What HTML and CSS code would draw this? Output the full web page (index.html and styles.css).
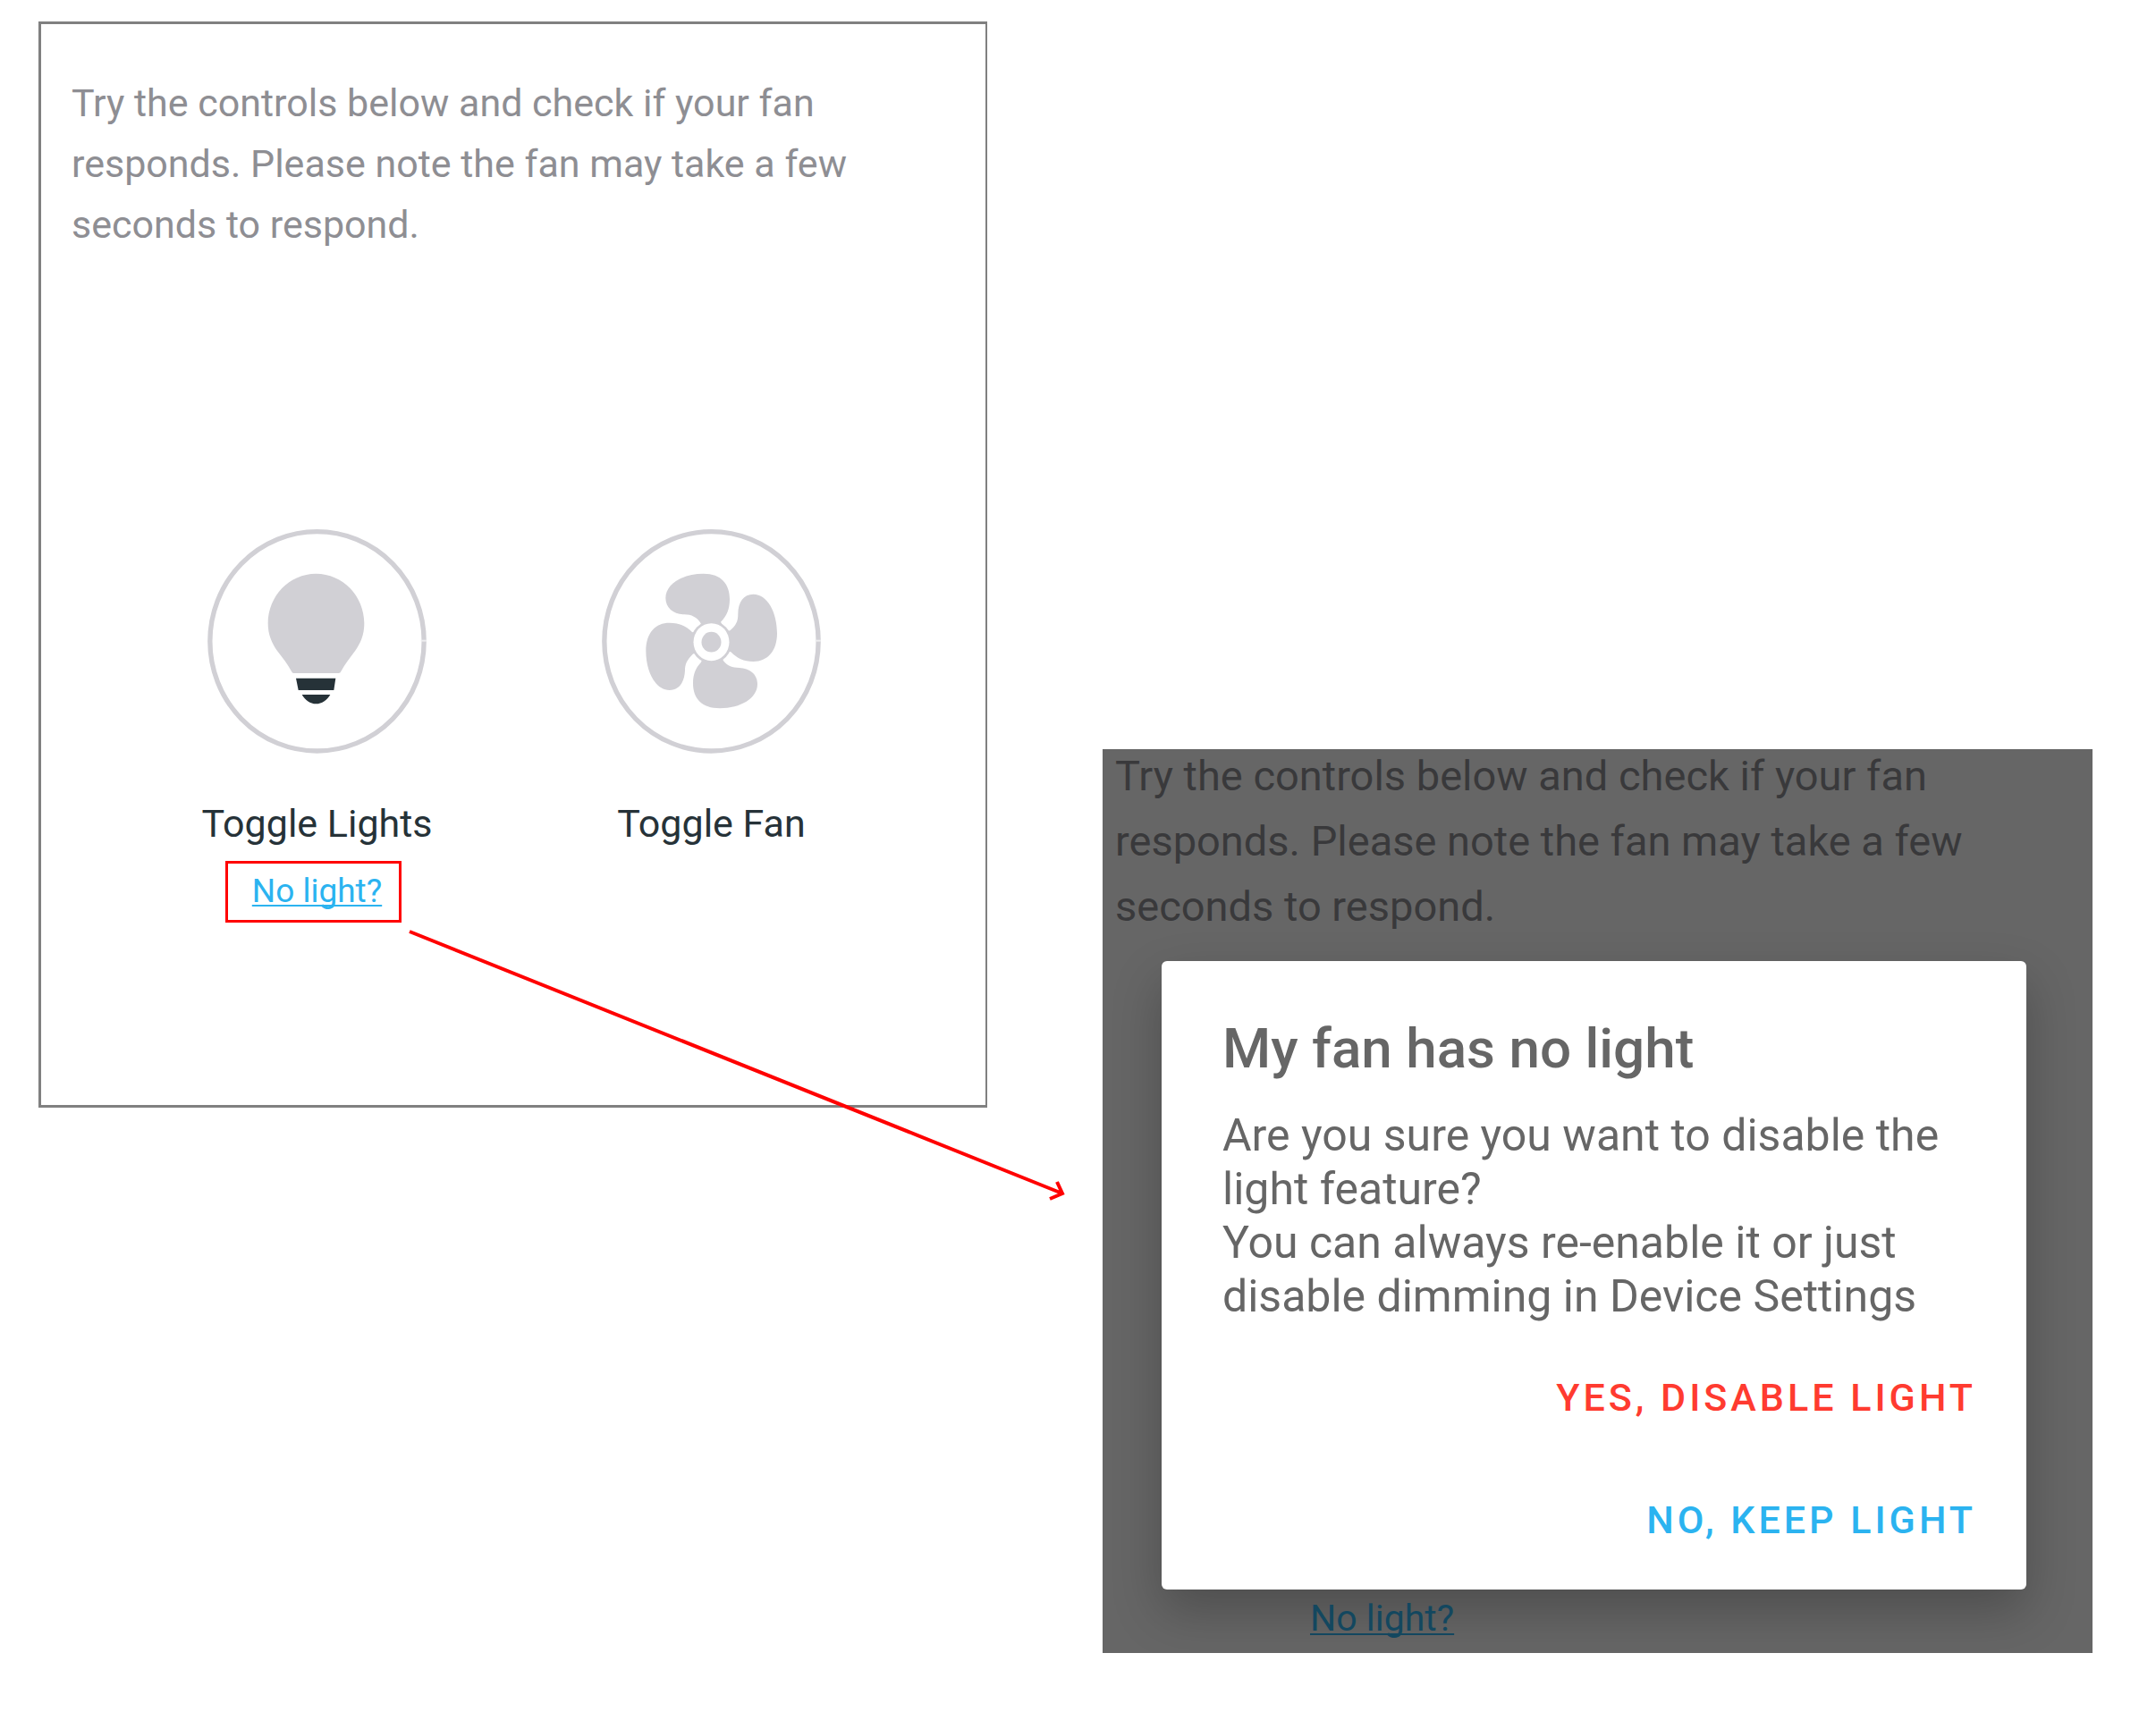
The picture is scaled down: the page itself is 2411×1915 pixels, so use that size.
FILE: index.html
```html
<!DOCTYPE html>
<html lang="en">
<head>
    <meta charset="utf-8">
    <title>Fan Setup</title>
    <meta name="viewport" content="width=device-width, initial-scale=1.0">
    <link rel="stylesheet" href="styles.css">
</head>
<body>
    <main class="page">
        <section class="screen">
            <p class="intro">Try the controls below and check if your fan responds. Please note the fan may take a few seconds to respond.</p>

            <div class="controls">
                <div class="control">
                    <button type="button" class="toggle">
                        <svg class="toggle-icon" viewBox="66 66 735 753" aria-hidden="true">
                            <ellipse cx="433.5" cy="442" rx="359" ry="368" fill="none" stroke="#d1d0d5" stroke-width="16"/>
                            <path d="M782 440h20" stroke="#ececee" stroke-width="6"/>
                            <path fill="#d1d0d5" d="M430 215C520 215 592 290 592 382C592 420 580 448 562 473C545 497 527 518 514 543Q512 549 506 549H355Q350 549 348 543C335 518 318 498 300 474C282 448 269 420 269 382C269 290 341 215 430 215Z"/>
                            <path fill="#263238" d="M363 566H496L490 606H371ZM383 621H478C467 640 450 652 430 652C411 652 394 640 383 621Z"/>
                        </svg>
                        <span>Toggle Lights</span>
                    </button>
                    <div class="callout">
                        <a href="#no-light">No light?</a>
                        <svg class="arrow" viewBox="0 0 750 320" aria-hidden="true">
                            <path d="M12 13L742 306M736 293L742 306L728 312"/>
                        </svg>
                    </div>
                </div>

                <div class="control">
                    <button type="button" class="toggle">
                        <svg class="toggle-icon" viewBox="69 66 735 753" aria-hidden="true">
                            <ellipse cx="436.5" cy="442" rx="359" ry="368" fill="none" stroke="#d1d0d5" stroke-width="16"/>
                            <path d="M785 440h20" stroke="#ececee" stroke-width="6"/>
                            <g fill="#d1d0d5">
                                <path d="M400 380C388 362 370 352 346 352C310 352 283 330 283 297C283 250 340 215 410 215C470 215 498 250 498 300C498 335 488 358 468 377L480 400H410Z"/>
                                <path d="M499 406C519 388 526 376 526 350C526 310 545 284 577 284C625 284 657 345 657 415C657 475 625 510 577 510C545 510 522 499 502 478L480 470V410Z"/>
                                <path d="M477 508C492 526 506 531 530 531C567 533 591 553 591 586C591 633 535 667 465 667C405 667 375 635 375 583C375 552 384 531 402 512L410 490H470Z"/>
                                <path d="M374 485C354 505 348 519 348 540C346 580 328 606 296 606C250 606 217 545 217 475C217 412 250 380 296 380C328 380 352 390 372 411L400 420V470Z"/>
                                <ellipse cx="436.5" cy="444.5" rx="69" ry="71"/>
                            </g>
                            <ellipse cx="436.5" cy="444.5" rx="60" ry="63" fill="#fff"/>
                            <ellipse cx="436.5" cy="444.5" rx="33" ry="34" fill="#d1d0d5"/>
                        </svg>
                        <span>Toggle Fan</span>
                    </button>
                </div>
            </div>
        </section>

        <section class="screen-dimmed">
            <p class="intro">Try the controls below and check if your fan responds. Please note the fan may take a few seconds to respond.</p>

            <div class="dialog" id="no-light" role="dialog" aria-labelledby="dialog-title">
                <h2 id="dialog-title">My fan has no light</h2>
                <p>Are you sure you want to disable the light feature?<br>You can always re-enable it or just disable dimming in Device Settings</p>
                <div class="dialog-actions">
                    <button type="button" class="danger">Yes, disable light</button>
                    <button type="button">No, keep light</button>
                </div>
            </div>

            <a href="#no-light">No light?</a>
        </section>
    </main>
</body>
</html>
```

FILE: styles.css
```css
* {
    box-sizing: border-box;
}
body {
    margin: 0;
    background-color: #fff;
    font-family: Roboto, Arial, sans-serif;
}
button {
    border: none;
    padding: 0;
    background: none;
    font-family: inherit;
    cursor: pointer;
}
a {
    color: #2bb3f0;
    text-decoration-thickness: 2px;
    text-decoration-skip-ink: none;
    text-underline-offset: 3px;
}
.page {
    display: grid;
    grid-template-columns: 1061fr 1107fr;
    column-gap: 129px;
    align-items: start;
    padding: 24px 71px 65px 43px;
}

/* controls screen */
.screen {
    border: 3px solid #808080;
    border-right-width: 2px;
    padding-bottom: 204px;
}
.intro {
    margin: 0;
    padding: 54px 34px 0;
    font-size: 43px;
    line-height: 68px;
    color: #8e8e93;
}
.controls {
    display: grid;
    grid-template-columns: 1fr 1fr;
    margin-top: 307px;
    padding: 0 86px 0 88px;
}
.control {
    display: flex;
    flex-direction: column;
    align-items: center;
}
.toggle {
    display: flex;
    flex-direction: column;
    align-items: center;
    gap: 52px;
    font-size: 43px;
    line-height: 52px;
    color: #263238;
}
.toggle-icon {
    width: 245px;
    height: 251px;
}
.callout {
    position: relative;
    margin: 16px 8px 0 0;
    border: 3px solid #f00;
    padding: 6px 19px 7px 27px;
    font-size: 37px;
    line-height: 50px;
}
.arrow {
    position: absolute;
    top: 100%;
    left: 100%;
    width: 750px;
    height: 320px;
    fill: none;
    stroke: #f00;
    stroke-width: 4;
    pointer-events: none;
}

/* same screen behind the dialog */
.screen-dimmed {
    margin-top: 814px;
    padding-bottom: 14px;
    background-color: #666;
    overflow: hidden;
}
.screen-dimmed .intro {
    margin-top: -7px;
    padding: 0 14px;
    font-size: 47px;
    line-height: 73px;
    color: #39393b;
}
.screen-dimmed > a {
    display: block;
    width: max-content;
    margin: 7px 0 0 232px;
    font-size: 41px;
    line-height: 50px;
    color: #13475f;
}
.dialog {
    margin: 25px 74px 0 66px;
    border-radius: 6px;
    padding: 62px 56px 52px 68px;
    background-color: #fff;
    color: #666;
    box-shadow: 0 24px 56px rgba(0, 0, 0, 0.24);
}
.dialog h2 {
    margin: 0;
    font-size: 62px;
    font-weight: 500;
    line-height: 72px;
}
.dialog p {
    margin: 31px 0 0;
    font-size: 50px;
    line-height: 60px;
}
.dialog-actions {
    display: flex;
    flex-direction: column;
    align-items: flex-end;
    gap: 85px;
    margin-top: 57px;
}
.dialog-actions button {
    font-size: 43px;
    font-weight: 500;
    line-height: 52px;
    letter-spacing: 4px;
    text-transform: uppercase;
    color: #2bb3f0;
}
.dialog-actions .danger {
    color: #ff3b30;
}
```
